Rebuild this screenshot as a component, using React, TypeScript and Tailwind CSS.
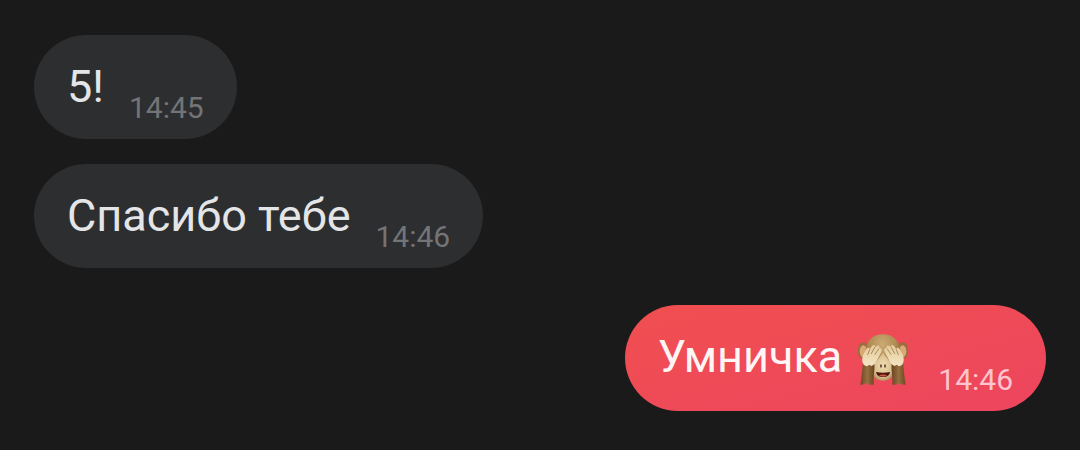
import React from "react";

function MonkeyEmoji() {
  return (
    <svg viewBox="20 18 156 153" className="mr-1 h-[51px] w-[52px] shrink-0" role="img" aria-label="🙈">
      <defs>
        <radialGradient id="fur" cx="0.48" cy="0.24" r="0.7">
          <stop offset="0" stopColor="#cbab72" />
          <stop offset="0.55" stopColor="#b08b52" />
          <stop offset="1" stopColor="#7d5830" />
        </radialGradient>
        <linearGradient id="arm" x1="0" y1="0" x2="1" y2="0">
          <stop offset="0" stopColor="#6d4822" />
          <stop offset="0.5" stopColor="#967040" />
          <stop offset="1" stopColor="#674320" />
        </linearGradient>
        <linearGradient id="hand" x1="0" y1="0" x2="0" y2="1">
          <stop offset="0" stopColor="#e3ca9a" />
          <stop offset="1" stopColor="#f3e5c4" />
        </linearGradient>
        <radialGradient id="muzzle" cx="0.5" cy="0.45" r="0.6">
          <stop offset="0" stopColor="#efdcb2" />
          <stop offset="0.7" stopColor="#d9bf8d" />
          <stop offset="1" stopColor="#aa8757" />
        </radialGradient>
      </defs>
      <ellipse cx="39" cy="68" rx="17" ry="25" fill="#9a6d3c" />
      <ellipse cx="39" cy="70" rx="11" ry="18" fill="#d9a874" />
      <ellipse cx="157" cy="68" rx="17" ry="25" fill="#9a6d3c" />
      <ellipse cx="157" cy="70" rx="11" ry="18" fill="#d9a874" />
      <path d="M98 19C66 19 47 41 46 68C45 85 49 100 59 113L70 145H126L137 113C147 100 151 85 150 68C149 41 130 19 98 19Z" fill="url(#fur)" />
      <path d="M98 74C88 91 66 108 66 128C66 147 80 158 98 158C116 158 130 147 130 128C130 108 108 91 98 74Z" fill="url(#muzzle)" />
      <ellipse cx="92" cy="114" rx="2.5" ry="5" fill="#4b3022" />
      <ellipse cx="104" cy="114" rx="2.5" ry="5" fill="#4b3022" />
      <path d="M77 132C90 135 106 135 119 132C118 143 109 147 98 147C87 147 79 143 77 132Z" fill="#4d1512" />
      <path d="M86 142C92 139 104 139 110 142C104 147 92 147 86 142Z" fill="#cf5743" />
      <g id="covered-eye">
        <path d="M38 103L72 109C74 121 70 137 70 151V170H58L54 166L49 170L43 166L38 170H30C34 151 35 127 38 103Z" fill="url(#arm)" />
        <path d="M42 112C34 104 35 92 38 82L48 63C52 57 58 59 58 64L65 54C69 48 75 51 74 57L79 54C84 50 89 54 87 60C93 59 96 65 93 71L80 97C77 106 71 111 63 114L57 110L50 115Z" fill="url(#hand)" />
        <path d="M52 80L58 65M63 77L73 58M74 79L85 63" stroke="#a27a4c" strokeWidth="2.5" strokeLinecap="round" />
      </g>
      <use href="#covered-eye" transform="translate(196 0) scale(-1 1)" />
    </svg>
  );
}

type MessageProps = { time: string; outgoing?: boolean; children: React.ReactNode };

function Message({ time, outgoing = false, children }: MessageProps) {
  return (
    <article
      className={`flex max-w-full items-end gap-[25px] rounded-[54px] px-[33px] ${
        outgoing
          ? "mt-3 self-end bg-linear-to-br from-[#f04f50] to-[#ed455e] text-[#fff5f5]"
          : "self-start bg-[#2d2e30] text-[#e4e5e7]"
      }`}
    >
      <p className="my-[26px] flex items-end gap-[15px] text-[45px] leading-[52px]">{children}</p>
      <time
        className={`mb-[13px] text-[30px] leading-9 ${outgoing ? "text-[#ffc4cc]" : "text-[#737477]"}`}
      >
        {time}
      </time>
    </article>
  );
}

export default function App() {
  return (
    <main className="flex min-h-screen flex-col gap-[25px] bg-[#1a1a1a] px-[34px] pt-[35px] pb-9 font-['Roboto',sans-serif]">
      <Message time="14:45">5!</Message>
      <Message time="14:46">Спасибо тебе</Message>
      <Message time="14:46" outgoing>
        <span className="mb-0.5">Умничка</span>
        <MonkeyEmoji />
      </Message>
    </main>
  );
}
